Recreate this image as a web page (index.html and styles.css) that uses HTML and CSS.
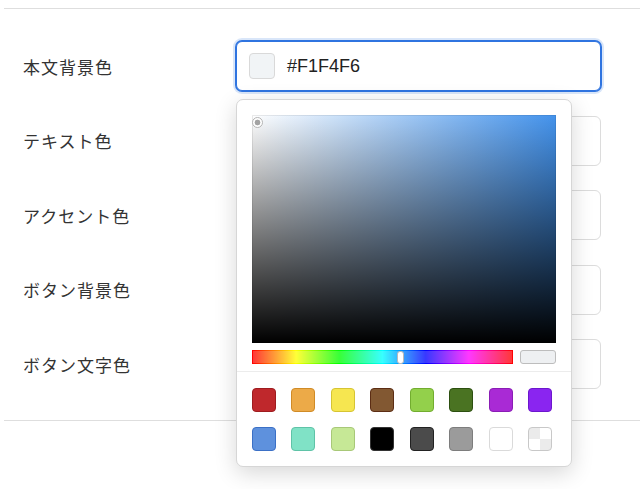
FILE: index.html
```html
<!DOCTYPE html>
<html lang="ja">
<head>
    <meta charset="utf-8">
    <meta name="viewport" content="width=device-width, initial-scale=1.0">
    <title>カラー設定</title>
    <link rel="stylesheet" href="styles.css">
</head>
<body>
    <div class="panel">
        <div class="row">
            <label class="row-label">本文背景色</label>
            <div class="field-wrap">
                <div class="color-field is-active">
                    <span class="chip" style="background:#F1F4F6"></span>
                    <span class="hex">#F1F4F6</span>
                </div>

                <div class="picker">
                    <div class="sat-area">
                        <span class="sat-marker"></span>
                    </div>
                    <div class="hue-row">
                        <div class="hue-bar">
                            <span class="hue-thumb"></span>
                        </div>
                        <div class="preview"></div>
                    </div>
                    <div class="palette">
                        <span class="sw sw-red"></span>
                        <span class="sw sw-orange"></span>
                        <span class="sw sw-yellow"></span>
                        <span class="sw sw-brown"></span>
                        <span class="sw sw-lime"></span>
                        <span class="sw sw-forest"></span>
                        <span class="sw sw-purple"></span>
                        <span class="sw sw-violet"></span>
                        <span class="sw sw-blue"></span>
                        <span class="sw sw-teal"></span>
                        <span class="sw sw-mint"></span>
                        <span class="sw sw-black"></span>
                        <span class="sw sw-charcoal"></span>
                        <span class="sw sw-gray"></span>
                        <span class="sw sw-white"></span>
                        <span class="sw sw-clear"></span>
                    </div>
                </div>
            </div>
        </div>

        <div class="row">
            <label class="row-label">テキスト色</label>
            <div class="field-wrap">
                <div class="color-field">
                    <span class="chip" style="background:#333333"></span>
                    <span class="hex">#333333</span>
                </div>
            </div>
        </div>

        <div class="row">
            <label class="row-label">アクセント色</label>
            <div class="field-wrap">
                <div class="color-field">
                    <span class="chip" style="background:#2F74E0"></span>
                    <span class="hex">#2F74E0</span>
                </div>
            </div>
        </div>

        <div class="row">
            <label class="row-label">ボタン背景色</label>
            <div class="field-wrap">
                <div class="color-field">
                    <span class="chip" style="background:#2F74E0"></span>
                    <span class="hex">#2F74E0</span>
                </div>
            </div>
        </div>

        <div class="row">
            <label class="row-label">ボタン文字色</label>
            <div class="field-wrap">
                <div class="color-field">
                    <span class="chip" style="background:#FFFFFF"></span>
                    <span class="hex">#FFFFFF</span>
                </div>
            </div>
        </div>
    </div>
</body>
</html>
```

FILE: styles.css
```css
:root {
    --line: #dedede;
    --text: #333333;
    --focus: #2f74e0;
}

* {
    margin: 0;
    padding: 0;
    box-sizing: border-box;
}

html,
body {
    min-height: 489px;
}

body {
    font-family: "Noto Sans CJK JP", "Liberation Sans", sans-serif;
    background: #ffffff;
    color: var(--text);
}

.panel {
    margin: 8px 0 0 4px;
    border-top: 1px solid var(--line);
    border-bottom: 1px solid var(--line);
    padding: 32px 0 31px 19px;
    display: flex;
    flex-direction: column;
    gap: 24.5px;
}

.row {
    display: grid;
    grid-template-columns: 213px 365px;
    align-items: center;
}

.row-label {
    font-size: 17px;
    letter-spacing: 1px;
    color: #333;
}

.field-wrap {
    position: relative;
}

.color-field {
    height: 50px;
    border: 1px solid #dcdcdc;
    border-radius: 6px;
    display: flex;
    align-items: center;
    gap: 12px;
    padding-left: 12px;
    background: #fff;
}

.color-field.is-active {
    border-color: var(--focus);
    box-shadow: 0 0 0 1px var(--focus), 0 0 0 3px rgba(47, 116, 224, 0.18);
}

.chip {
    width: 26px;
    height: 26px;
    border: 1px solid #d9d9d9;
    border-radius: 4px;
}

.hex {
    font-family: "Liberation Sans", Arial, sans-serif;
    font-size: 18px;
    color: #222;
}

/* Color picker popover */
.picker {
    position: absolute;
    top: calc(100% + 8px);
    left: 0;
    width: 336px;
    background: #fff;
    border: 1px solid #d6d6d6;
    border-radius: 7px;
    box-shadow: 0 6px 22px rgba(0, 0, 0, 0.16);
    z-index: 10;
}

.sat-area {
    position: relative;
    margin: 15px 15px 0;
    height: 228px;
    background:
        linear-gradient(to top, #000, rgba(0, 0, 0, 0)),
        linear-gradient(to right, #fff, #4493ec);
    box-shadow: inset 0 0 0 1px rgba(0, 0, 0, 0.08);
}

.sat-marker {
    position: absolute;
    left: 0;
    top: 2px;
    width: 11px;
    height: 11px;
    border-radius: 50%;
    border: 1px solid #b5b5b5;
    background: radial-gradient(circle, #a3a3a3 2.6px, #fff 3.2px);
}

.hue-row {
    display: flex;
    gap: 7px;
    margin: 7px 15px 0;
    height: 14px;
}

.hue-bar {
    position: relative;
    flex: 1;
    border: 1px solid transparent;
    background:
        linear-gradient(rgba(255, 255, 255, 0.22), rgba(255, 255, 255, 0.22)) padding-box,
        linear-gradient(to right, #f00, #ff0, #0f0, #0ff, #00f, #f0f, #f00) padding-box,
        linear-gradient(to right, #f00, #ff0, #0f0, #0ff, #00f, #f0f, #f00) border-box;
}

.hue-thumb {
    position: absolute;
    left: 144px;
    top: 0;
    width: 7px;
    height: 13px;
    background: #fff;
    border: 1px solid #b9b9b9;
    border-radius: 3px;
}

.preview {
    width: 36px;
    background: #eef0f2;
    border: 1px solid #bdbdbd;
    border-radius: 3px;
}

.palette {
    border-top: 1px solid #ececec;
    margin-top: 7px;
    padding: 16px 19px 15px 15px;
    display: grid;
    grid-template-columns: repeat(8, 24px);
    justify-content: space-between;
    row-gap: 15px;
}

.sw {
    width: 24px;
    height: 24px;
    border-radius: 4px;
    border: 1px solid;
}

.sw-red { background: #bf282c; border-color: #9e1c1f; }
.sw-orange { background: #ecaa48; border-color: #d08b26; }
.sw-yellow { background: #f6e650; border-color: #d6c433; }
.sw-brown { background: #825832; border-color: #5c2d14; }
.sw-lime { background: #93d04b; border-color: #72ad2f; }
.sw-forest { background: #4a7322; border-color: #2c4f10; }
.sw-purple { background: #a92ad5; border-color: #8a1db5; }
.sw-violet { background: #8a25f0; border-color: #6c17cd; }
.sw-blue { background: #5e91dd; border-color: #3b70c6; }
.sw-teal { background: #80e2c6; border-color: #5fc3a7; }
.sw-mint { background: #c6e896; border-color: #a8c878; }
.sw-black { background: #000; border-color: #333; }
.sw-charcoal { background: #4b4b4b; border-color: #222; }
.sw-gray { background: #9b9b9b; border-color: #7d7d7d; }
.sw-white { background: #fff; border-color: #dadada; }

.sw-clear {
    border-color: #c8c8c8;
    background:
        linear-gradient(#ebebeb, #ebebeb) 0 0 / 50% 50% no-repeat,
        linear-gradient(#ebebeb, #ebebeb) 100% 100% / 50% 50% no-repeat,
        #fff;
}
```
